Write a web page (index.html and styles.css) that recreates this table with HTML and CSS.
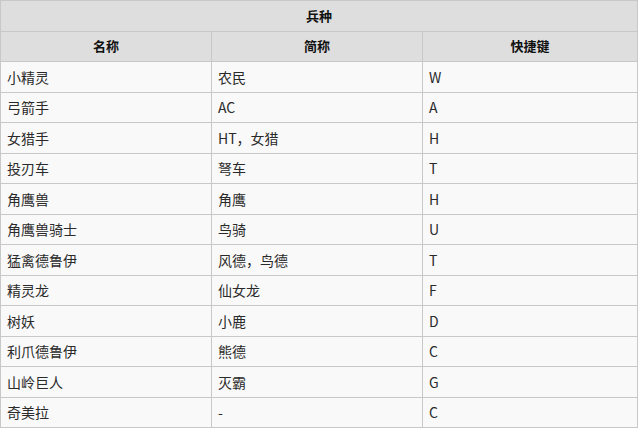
FILE: index.html
```html
<!DOCTYPE html>
<html lang="zh">
<head>
<meta charset="utf-8">
<link rel="stylesheet" href="styles.css">
</head>
<body>
<table class="units">
  <colgroup><col class="c1"><col class="c2"><col class="c3"></colgroup>
  <thead>
    <tr><th colspan="3" class="title">兵种</th></tr>
    <tr><th>名称</th><th>简称</th><th>快捷键</th></tr>
  </thead>
  <tbody>
    <tr><td>小精灵</td><td>农民</td><td>W</td></tr>
    <tr><td>弓箭手</td><td>AC</td><td>A</td></tr>
    <tr><td>女猎手</td><td>HT，女猎</td><td>H</td></tr>
    <tr><td>投刃车</td><td>弩车</td><td>T</td></tr>
    <tr><td>角鹰兽</td><td>角鹰</td><td>H</td></tr>
    <tr><td>角鹰兽骑士</td><td>鸟骑</td><td>U</td></tr>
    <tr><td>猛禽德鲁伊</td><td>风德，鸟德</td><td>T</td></tr>
    <tr><td>精灵龙</td><td>仙女龙</td><td>F</td></tr>
    <tr><td>树妖</td><td>小鹿</td><td>D</td></tr>
    <tr><td>利爪德鲁伊</td><td>熊德</td><td>C</td></tr>
    <tr><td>山岭巨人</td><td>灭霸</td><td>G</td></tr>
    <tr><td>奇美拉</td><td>-</td><td>C</td></tr>
  </tbody>
</table>
</body>
</html>
```

FILE: styles.css
```css
html, body {
  margin: 0;
  padding: 0;
  background: #ffffff;
}
body {
  font-family: "Noto Sans CJK SC", "Noto Sans", sans-serif;
  font-size: 14px;
  color: #2a2a2a;
}
.units {
  width: 637px;
  border-collapse: collapse;
  table-layout: fixed;
  background: #f9f9f9;
  border: 1px solid #c8c8c8;
}
.c1 { width: 211px; }
.c2 { width: 211px; }
.c3 { width: 215px; }
.units th,
.units td {
  border: 1px solid #c8c8c8;
  height: 29.5px;
  padding: 0 6px;
  line-height: 18px;
  vertical-align: middle;
}
.units th {
  background: #dedede;
  font-weight: bold;
  text-align: center;
  color: #111111;
  font-size: 13px;
}
.units td {
  text-align: left;
}
```
